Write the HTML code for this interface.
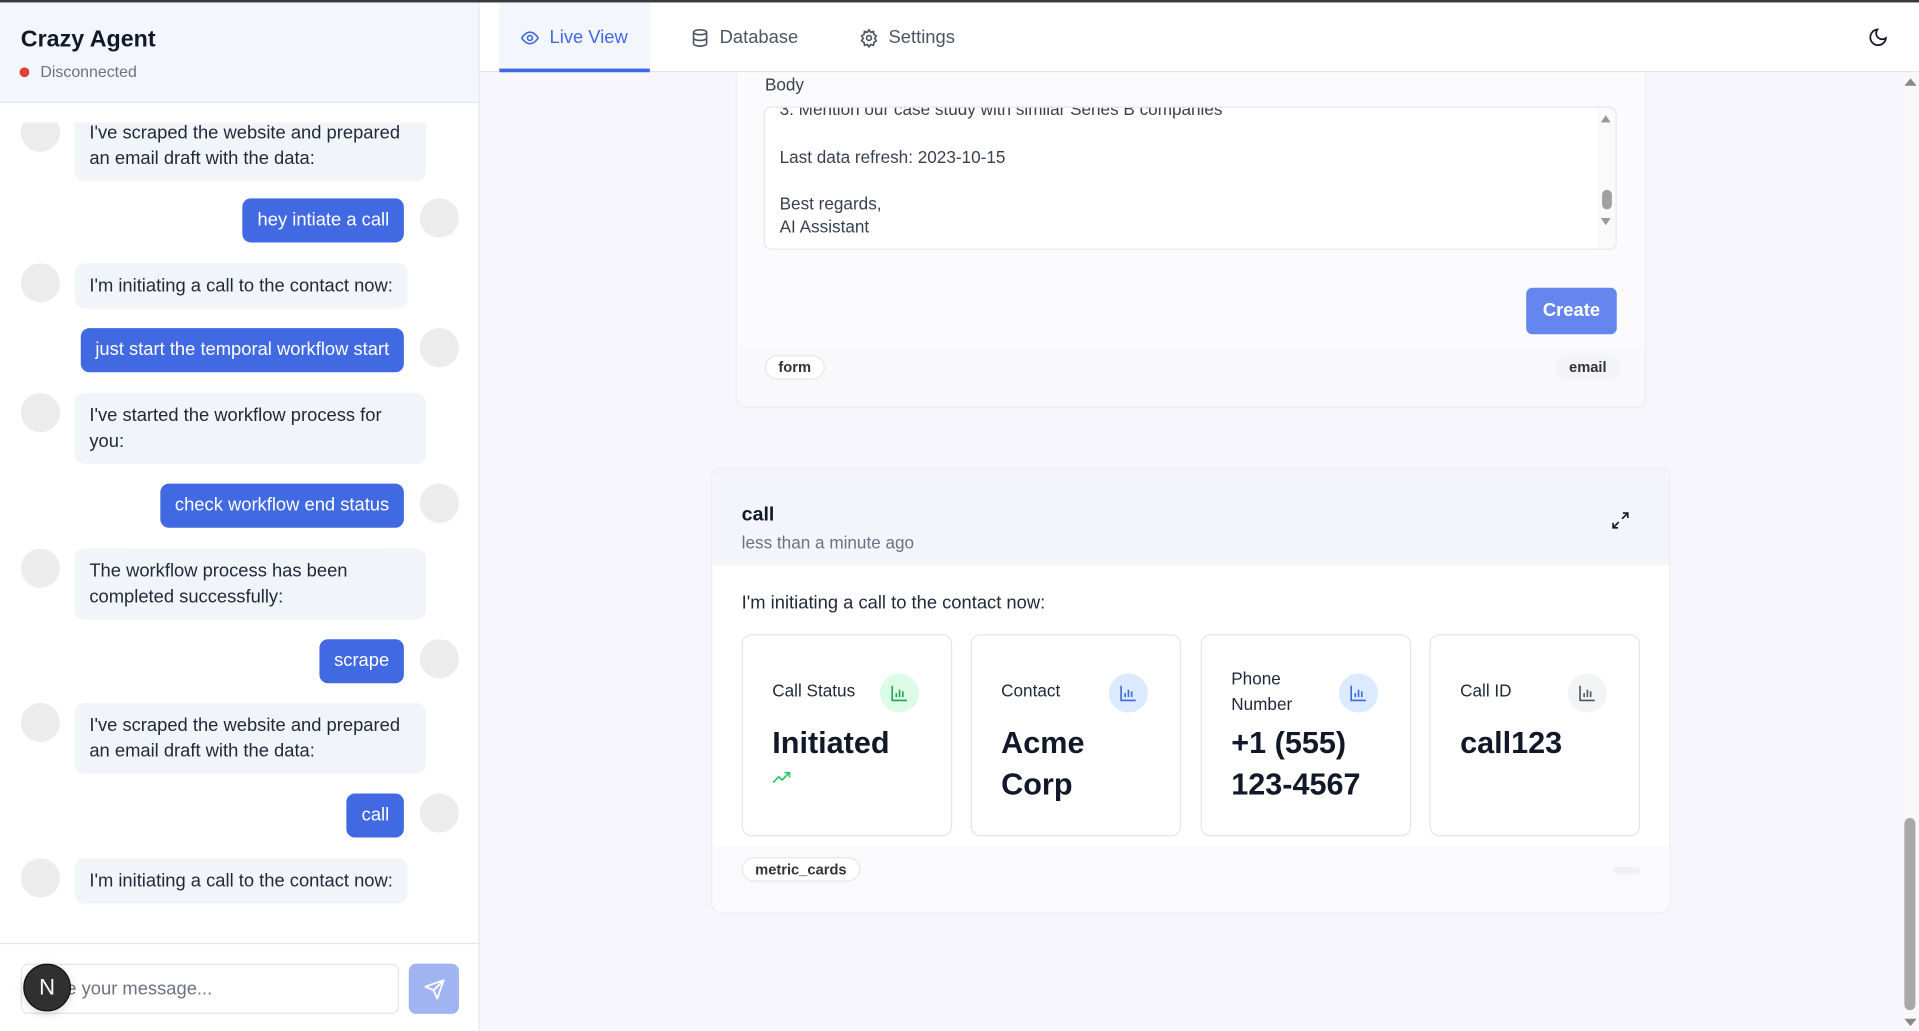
<!DOCTYPE html>
<html><head><meta charset="utf-8"><style>
*{box-sizing:border-box;margin:0;padding:0}
html,body{width:1919px;height:1031px;overflow:hidden;background:#f7f6fd;font-family:"Liberation Sans",Arial,sans-serif}
#w{position:absolute;left:0;top:0;width:1568px;height:842px;transform:scale(1.2239,1.2245);transform-origin:0 0;background:#f7f6fd}
.a{position:absolute}
.topline{left:0;top:0;width:1568px;height:2px;background:#3a3a3a;z-index:9}
.side{left:0;top:0;width:392px;height:842px;background:#fff;border-right:1px solid #e4e6ee;overflow:hidden}
.hdr{left:0;top:0;width:391px;height:84px;background:#f3f6fd;border-bottom:1px solid #e2e6ef}
.av{width:32px;height:32px;border-radius:50%;background:#ececec}
.bot{background:#f1f4f9;color:#1f2937;font-size:15px;line-height:21px;padding:8px 12px;border-radius:8px}
.usr{background:#4169e1;color:#fff;font-size:15px;line-height:20px;padding:8px 12px;border-radius:7px;white-space:nowrap}
.tab{top:2px;height:57px;font-size:15px;color:#4b5563;display:flex;align-items:center;gap:8px}
.card{background:#fbfbfe;border:1px solid #ececf4;border-radius:8px}
.badge{font-size:12px;font-weight:bold;color:#333;border:1px solid #e5e7eb;border-radius:10px;background:#fff;height:20px;line-height:18px;padding:0 10px}
.mc{top:518px;width:172px;height:165px;background:#fff;border:1px solid #e3e5ee;border-radius:8px}
.mc .l{position:absolute;left:24px;top:35px;font-size:14px;color:#1f2937;line-height:21px}
.mc .v{position:absolute;left:24px;font-size:25px;font-weight:bold;color:#111827;line-height:34px}
.mc .ic{position:absolute;left:112px;top:31px;width:32px;height:32px;border-radius:50%;display:flex;align-items:center;justify-content:center}
</style></head><body><div id="w">
<div class="a topline"></div>
<div class="a side">
 <div class="a hdr">
  <div class="a" style="left:17px;top:22px;font-size:19px;font-weight:bold;color:#111827">Crazy Agent</div>
  <div class="a" style="left:16px;top:55px;width:8px;height:8px;border-radius:50%;background:#e0403a"></div>
  <div class="a" style="left:33px;top:51px;font-size:13px;color:#6b7280">Disconnected</div>
 </div>
 <div class="a" style="left:0;top:100px;width:391px;height:669px;overflow:hidden"><div class="a" style="left:0;top:-15px;width:391px;height:700px">
  <div class="a av" style="left:17px;top:7px"></div>
  <div class="a bot" style="left:61px;top:5px;width:287px">I've scraped the website and prepared an email draft with the data:</div>
  <div class="a usr" style="right:61px;top:77px">hey intiate a call</div><div class="a av" style="left:343px;top:77px"></div>
  <div class="a av" style="left:17px;top:130px"></div>
  <div class="a bot" style="left:61px;top:130px;white-space:nowrap">I'm initiating a call to the contact now:</div>
  <div class="a usr" style="right:61px;top:183px">just start the temporal workflow start</div><div class="a av" style="left:343px;top:183px"></div>
  <div class="a av" style="left:17px;top:236px"></div>
  <div class="a bot" style="left:61px;top:236px;width:287px">I've started the workflow process for you:</div>
  <div class="a usr" style="right:61px;top:310px">check workflow end status</div><div class="a av" style="left:343px;top:310px"></div>
  <div class="a av" style="left:17px;top:363px"></div>
  <div class="a bot" style="left:61px;top:363px;width:287px">The workflow process has been completed successfully:</div>
  <div class="a usr" style="right:61px;top:437px">scrape</div><div class="a av" style="left:343px;top:437px"></div>
  <div class="a av" style="left:17px;top:489px"></div>
  <div class="a bot" style="left:61px;top:489px;width:287px">I've scraped the website and prepared an email draft with the data:</div>
  <div class="a usr" style="right:61px;top:563px">call</div><div class="a av" style="left:343px;top:563px"></div>
  <div class="a av" style="left:17px;top:616px"></div>
  <div class="a bot" style="left:61px;top:616px;white-space:nowrap">I'm initiating a call to the contact now:</div>
 </div></div>
 <div class="a" style="left:0;top:770px;width:391px;height:1px;background:#e4e6ee"></div>
 <div class="a" style="left:17px;top:787px;width:309px;height:41px;border:1px solid #e2e6ef;border-radius:6px;font-size:15px;color:#6b7280;line-height:39px;padding-left:12px">Type your message...</div>
 <div class="a" style="left:19px;top:787px;width:39px;height:39px;border-radius:50%;background:#2f302f;border:1px solid #111;color:#fff;font-size:18px;text-align:center;line-height:37px;box-shadow:0 2px 8px rgba(0,0,0,.15)">N</div>
 <div class="a" style="left:334px;top:787px;width:41px;height:41px;border-radius:6px;background:#a0b4f2;display:flex;align-items:center;justify-content:center">
  <svg width="18" height="18" viewBox="0 0 24 24" fill="none" stroke="#fff" stroke-width="2" stroke-linejoin="round"><path d="M22 2L11 13M22 2l-7 20-4-9-9-4z"/></svg></div>
</div>
<!-- form card -->
<div class="a card" style="left:601px;top:59px;width:744px;height:274px;border-top:none;border-radius:0 0 8px 8px"></div>
<div class="a" style="left:602px;top:283px;width:742px;height:49px;background:#f9f9fc;border-radius:0 0 8px 8px"></div>
<div class="a" style="left:625px;top:61px;font-size:14px;color:#374151">Body</div>
<div class="a" style="left:624px;top:87px;width:697px;height:117px;border:1px solid #e5e7eb;border-radius:6px;background:#fff;overflow:hidden">
 <div class="a" style="left:12px;top:-8px;font-size:14px;color:#374151;line-height:19.3px;white-space:pre">3. Mention our case study with similar Series B companies

Last data refresh: 2023-10-15

Best regards,
AI Assistant</div>
 <div class="a" style="right:0;top:0;width:15px;height:117px;background:#fafafa"></div>
 <div class="a" style="right:4px;top:6px;width:0;height:0;border:4px solid transparent;border-bottom:6px solid #999;border-top:0"></div>
 <div class="a" style="right:3px;top:67px;width:8px;height:16px;background:#a0a0a0;border-radius:4px"></div>
 <div class="a" style="right:4px;top:90px;width:0;height:0;border:4px solid transparent;border-top:6px solid #999;border-bottom:0"></div>
</div>
<div class="a" style="left:1247px;top:235px;width:74px;height:38px;background:#6585ef;border-radius:5px;color:#fff;font-size:15px;font-weight:bold;text-align:center;line-height:38px">Create</div>
<div class="a badge" style="left:625px;top:290px">form</div>
<div class="a badge" style="left:1271px;top:290px;background:#f3f4f6;border-color:#f3f4f6">email</div>
<!-- tab bar -->
<div class="a" style="left:392px;top:2px;width:1176px;height:57px;background:#fff;border-bottom:1px solid #e2e6ef"></div>
<div class="a" style="left:408px;top:2px;width:123px;height:57px;background:#f3f6fd;border-bottom:3px solid #4169e1"></div>
<div class="a tab" style="left:425px;color:#4169e1"><svg width="16" height="16" viewBox="0 0 24 24" fill="none" stroke="#4169e1" stroke-width="2"><path d="M2 12s4-7 10-7 10 7 10 7-4 7-10 7S2 12 2 12z"/><circle cx="12" cy="12" r="3"/></svg>Live View</div>
<div class="a tab" style="left:564px"><svg width="16" height="16" viewBox="0 0 24 24" fill="none" stroke="#4b5563" stroke-width="2"><ellipse cx="12" cy="5" rx="8" ry="3"/><path d="M4 5v14c0 1.7 3.6 3 8 3s8-1.3 8-3V5M4 12c0 1.7 3.6 3 8 3s8-1.3 8-3"/></svg>Database</div>
<div class="a tab" style="left:702px"><svg width="16" height="16" viewBox="0 0 24 24" fill="none" stroke="#4b5563" stroke-width="2"><circle cx="12" cy="12" r="3"/><path d="M12 2l2 3 3.5-1 .5 3.5 3 2-2 3 2 3-3 2-.5 3.5-3.5-1-2 3-2-3-3.5 1L6 17.5l-3-2 2-3-2-3 3-2L6.5 4 10 5z"/></svg>Settings</div>
<svg class="a" style="left:1526px;top:22px" width="17" height="17" viewBox="0 0 24 24" fill="none" stroke="#111827" stroke-width="2"><path d="M21 12.8A9 9 0 1 1 11.2 3a7 7 0 0 0 9.8 9.8z"/></svg>
<!-- scrollbar -->
<div class="a" style="left:1553px;top:60px;width:15px;height:782px;background:#f8f8fb"></div>
<div class="a" style="left:1556px;top:64px;width:0;height:0;border:5px solid transparent;border-bottom:6px solid #888;border-top:0"></div>
<div class="a" style="left:1556px;top:668px;width:9px;height:157px;background:#a8a8a8;border-radius:5px"></div>
<div class="a" style="left:1556px;top:832px;width:0;height:0;border:5px solid transparent;border-top:6px solid #888;border-bottom:0"></div>
<!-- call card -->
<div class="a card" style="left:581px;top:382px;width:784px;height:364px;background:#fff;overflow:hidden">
 <div class="a" style="left:0;top:0;width:784px;height:79px;background:#f4f5fb"></div>
 <div class="a" style="left:24px;top:29px;font-size:16px;font-weight:bold;color:#111827">call</div>
 <div class="a" style="left:24px;top:52px;font-size:14px;color:#6b7280">less than a minute ago</div>
 <svg class="a" style="left:734px;top:34px" width="16" height="16" viewBox="0 0 24 24" fill="none" stroke="#111827" stroke-width="2"><path d="M15 3h6v6M21 3l-7 7M9 21H3v-6M3 21l7-7"/></svg>
 <div class="a" style="left:24px;top:101px;font-size:15px;color:#1f2937">I'm initiating a call to the contact now:</div>
 <div class="a" style="left:0;top:308px;width:784px;height:56px;background:#fafafc"></div>
 <div class="a badge" style="left:24px;top:317px">metric_cards</div>
 <div class="a" style="left:736px;top:325px;width:22px;height:6px;background:#f0f1f5;border-radius:3px"></div>
</div>
<div class="a mc" style="left:606px"><div class="l">Call Status</div><div class="ic" style="background:#dcfce7"><svg width="16" height="16" viewBox="0 0 24 24" fill="none" stroke="#22a355" stroke-width="2"><path d="M3 3v18h18M8 17v-5M12 17V8M16 17v-7"/></svg></div><div class="v" style="top:71px">Initiated</div>
 <svg class="a" style="left:24px;top:110px" width="16" height="12" viewBox="0 0 24 16" fill="none" stroke="#22c55e" stroke-width="2"><path d="M1 14l7-7 4 4 9-9M15 2h6v6"/></svg></div>
<div class="a mc" style="left:793px"><div class="l">Contact</div><div class="ic" style="background:#dbeafe"><svg width="16" height="16" viewBox="0 0 24 24" fill="none" stroke="#3b6be3" stroke-width="2"><path d="M3 3v18h18M8 17v-5M12 17V8M16 17v-7"/></svg></div><div class="v" style="top:71px">Acme<br>Corp</div></div>
<div class="a mc" style="left:981px"><div class="l" style="top:25px">Phone<br>Number</div><div class="ic" style="background:#dbeafe"><svg width="16" height="16" viewBox="0 0 24 24" fill="none" stroke="#3b6be3" stroke-width="2"><path d="M3 3v18h18M8 17v-5M12 17V8M16 17v-7"/></svg></div><div class="v" style="top:71px">+1 (555)<br>123-4567</div></div>
<div class="a mc" style="left:1168px"><div class="l">Call ID</div><div class="ic" style="background:#f3f4f6"><svg width="16" height="16" viewBox="0 0 24 24" fill="none" stroke="#555" stroke-width="2"><path d="M3 3v18h18M8 17v-5M12 17V8M16 17v-7"/></svg></div><div class="v" style="top:71px">call123</div></div>
</div></body></html>
